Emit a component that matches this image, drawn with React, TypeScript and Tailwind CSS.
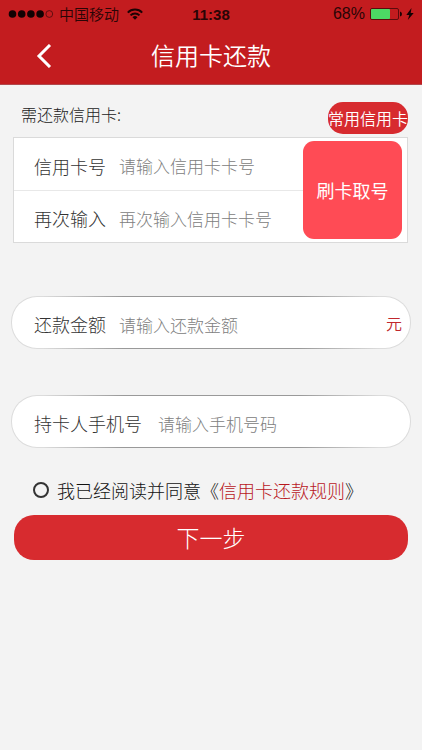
import { useState } from 'react';
import { clsx } from 'clsx';

interface FieldProps {
  id: string;
  label: string;
  placeholder: string;
  unit?: string;
  wide?: boolean;
}

function Field({ id, label, placeholder, unit, wide }: FieldProps) {
  return (
    <div className="flex h-full min-w-0 items-center">
      <label htmlFor={id} className="shrink-0 text-[18px] text-[#333]">
        {label}
      </label>
      <input
        id={id}
        type="text"
        placeholder={placeholder}
        className={clsx(
          'min-w-0 flex-1 bg-transparent text-[17px] text-[#333] outline-none placeholder:text-[#808080]',
          wide ? 'ml-4' : 'ml-[13px]',
        )}
      />
      {unit && <span className="pb-1 text-[16px] font-[350] text-[#c0282d]">{unit}</span>}
    </div>
  );
}

function RoundField(props: FieldProps) {
  return (
    <div className="h-[53px] rounded-[26px] bg-[linear-gradient(to_right,#dcdcdc_8%,#999_28%,#999_72%,#dcdcdc_92%)] p-px">
      <div className="h-full rounded-[25px] bg-white pt-1 pr-2 pl-[22px]">
        <Field {...props} />
      </div>
    </div>
  );
}

function StatusBar() {
  return (
    <div className="grid h-7 grid-cols-[1fr_auto_1fr] items-center px-2 text-[15px] leading-none text-[#2a0506]">
      <div className="flex items-center">
        <svg width="46" height="10" viewBox="0 0 46 10" aria-hidden="true">
          <g fill="#120203">
            <circle cx="4.5" cy="5" r="3.8" />
            <circle cx="13.7" cy="5" r="3.8" />
            <circle cx="22.9" cy="5" r="3.8" />
            <circle cx="32.1" cy="5" r="3.8" />
          </g>
          <circle cx="41.3" cy="5" r="3.4" fill="none" stroke="#4a0a0c" strokeWidth="0.8" />
        </svg>
        <span className="ml-[5px] pb-px font-[350]">中国移动</span>
        <svg className="ml-2" width="16" height="12" viewBox="0 0 16 12" aria-hidden="true">
          <g fill="none" stroke="#1c0304" strokeWidth="2">
            <path d="M0.8 4.6a10.2 10.2 0 0 1 14.4 0" />
            <path d="M3.5 7.4a6.4 6.4 0 0 1 9 0" />
          </g>
          <path d="M8 11.8 5.5 9.3a3.5 3.5 0 0 1 5 0z" fill="#1c0304" />
        </svg>
      </div>
      <span className="font-['Liberation_Sans',sans-serif] text-[15px] font-bold">11:38</span>
      <div className="flex items-center justify-end">
        <span className="font-['Liberation_Sans',sans-serif] text-[16px]">68%</span>
        <svg className="ml-1" width="34" height="14" viewBox="0 0 34 14" aria-hidden="true">
          <rect x="1.5" y="1.5" width="28" height="11" rx="1.5" fill="none" stroke="#5c0b0d" />
          <rect x="2" y="2" width="19" height="10" rx="1" fill="#4cd964" />
          <path d="M31 4.5q2 0.5 2 2.5t-2 2.5z" fill="#1c0304" />
        </svg>
        <svg className="ml-[3px]" width="8" height="12" viewBox="0 0 8 12" aria-hidden="true">
          <path d="M5.5 0 0.3 6.9h3L1.8 12 7.7 4.9h-3z" fill="#120203" />
        </svg>
      </div>
    </div>
  );
}

export default function App() {
  const [agreed, setAgreed] = useState(false);

  return (
    <div className="min-h-screen bg-[#f3f3f3] font-['Noto_Sans_CJK_SC',sans-serif] font-light">
      <header className="border-b border-[#b0484c] bg-[#c31c1f]">
        <StatusBar />
        <div className="grid h-14 grid-cols-[1fr_auto_1fr] items-center">
          <button type="button" aria-label="返回" className="ml-9 w-4">
            <svg width="16" height="24" viewBox="0 0 16 24" aria-hidden="true">
              <path d="M14 1 3 12l11 11" fill="none" stroke="#fff" strokeWidth="3" />
            </svg>
          </button>
          <h1 className="pb-0.5 text-[24px] font-[350] text-white">信用卡还款</h1>
        </div>
      </header>

      <form className="pt-4" onSubmit={(e) => e.preventDefault()}>
        <section className="pr-[14px] pl-[13px]">
          <div className="flex h-9 items-start justify-between pl-2">
            <h2 className="text-[16px] leading-[26px] font-light text-[#222]">需还款信用卡:</h2>
            <button
              type="button"
              className="mt-px h-8 w-20 rounded-[15px] bg-[#d72b2f] text-[16px] font-[350] whitespace-nowrap text-white"
            >
              常用信用卡
            </button>
          </div>
          <div className="flex border border-[#dadada] bg-white">
            <div className="min-w-0 flex-1 divide-y divide-[#e8e8e8]">
              <div className="h-[53px] pt-1 pl-5">
                <Field id="card" label="信用卡号" placeholder="请输入信用卡卡号" />
              </div>
              <div className="h-[51px] pt-1 pl-5">
                <Field id="card-again" label="再次输入" placeholder="再次输入信用卡卡号" />
              </div>
            </div>
            <button
              type="button"
              className="my-[3px] mr-[5px] w-[99px] rounded-[11px] bg-[#ff4b55] text-[18px] font-normal text-white"
            >
              刷卡取号
            </button>
          </div>
        </section>

        <section className="mt-[53px] flex flex-col gap-[46px] px-[11px]">
          <RoundField id="amount" label="还款金额" placeholder="请输入还款金额" unit="元" />
          <RoundField id="phone" label="持卡人手机号" placeholder="请输入手机号码" wide />
        </section>

        <div className="mt-7 flex h-7 items-center pl-[33px] text-[18px] text-[#111]">
          <input
            id="agree"
            type="checkbox"
            checked={agreed}
            onChange={(e) => setAgreed(e.target.checked)}
            className="size-4 shrink-0 appearance-none rounded-full border-2 border-[#333] checked:bg-[#d72b2f]"
          />
          <label htmlFor="agree" className="ml-2">
            我已经阅读并同意
          </label>
          <span>
            《
            <a href="#rules" className="text-[#b8161c]">
              信用卡还款规则
            </a>
            》
          </span>
        </div>

        <div className="mt-[11px] px-[14px]">
          <button type="submit" className="h-[45px] w-full rounded-[20px] bg-[#d72b2f] text-[23px] text-white">
            下一步
          </button>
        </div>
      </form>
    </div>
  );
}
